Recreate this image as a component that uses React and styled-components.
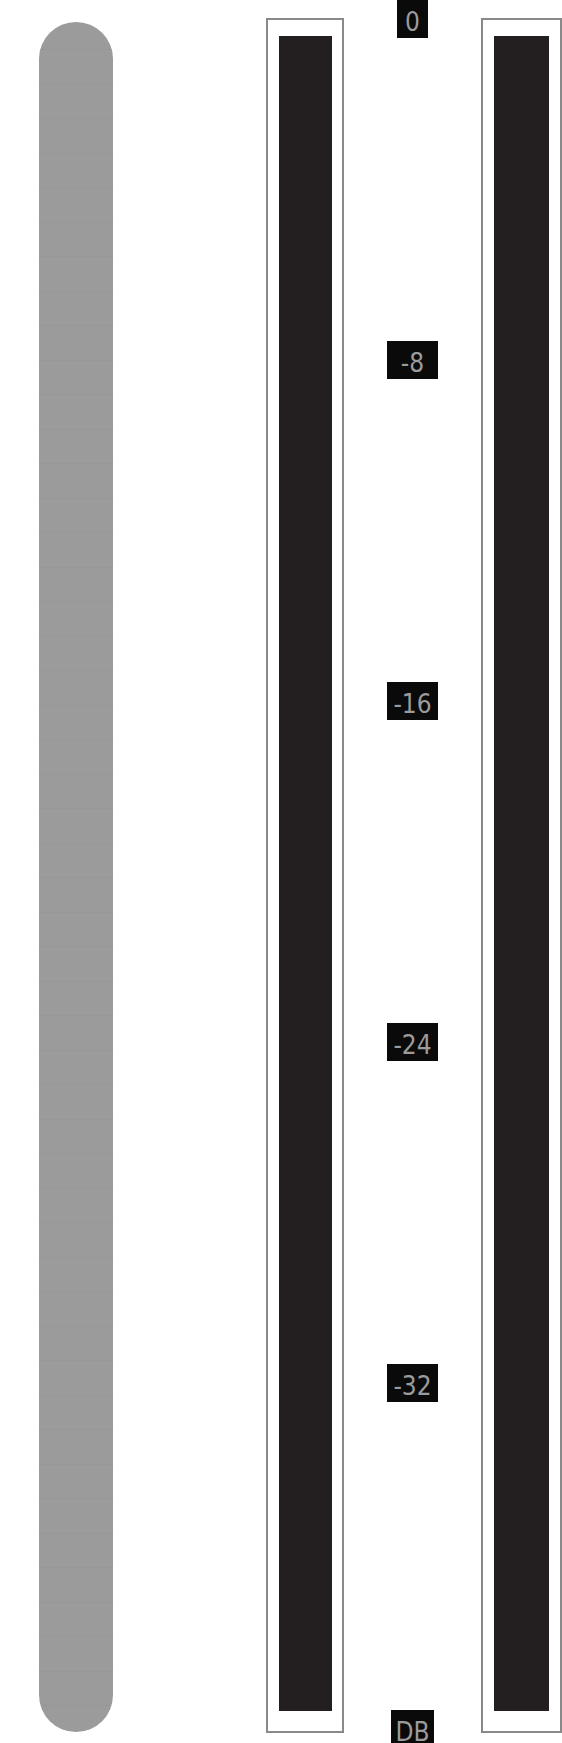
import React from 'react';
import styled, { createGlobalStyle } from 'styled-components';

const Global = createGlobalStyle`
  html, body { margin: 0; padding: 0; background: #ffffff; }
  body { width: 562px; height: 1743px; overflow: hidden; }
`;

const Stage = styled.div`
  display: flex;
  align-items: flex-start;
  width: 562px;
  height: 1743px;
  padding-left: 39px;
  box-sizing: border-box;
`;

const Fader = styled.div`
  flex: none;
  width: 74px;
  height: 1710px;
  margin-top: 22px;
  margin-right: 153px;
  border-radius: 37px;
  background: #9a9b9a;
  overflow: hidden;
  display: flex;
  flex-direction: column;
  padding-top: 27px;
  box-sizing: border-box;
`;

const FaderSegment = styled.div`
  flex: none;
  height: 34.5px;
  border-top: 1px solid #969796;
  box-sizing: border-box;
`;

const Meter = styled.div`
  flex: none;
  width: ${(p) => p.$w}px;
  height: 1715px;
  margin-top: 18px;
  border: 2px solid #898989;
  box-sizing: border-box;
  padding: 16px ${(p) => p.$pr}px 20px 11px;
`;

const MeterWell = styled.div`
  height: 100%;
  background: #231f20;
`;

const Scale = styled.div`
  flex: none;
  width: 137px;
  display: flex;
  flex-direction: column;
  align-items: center;
  gap: 303px;
`;

const Tick = styled.div`
  box-sizing: border-box;
  height: 38px;
  overflow: hidden;
  min-width: ${(p) => (p.$wide ? 51 : 31)}px;
  padding: 0 4px;
  margin-top: ${(p) => p.$mt || 0}px;
  background: #0a0a0a;
  color: #9b9b9b;
  font-family: 'Liberation Sans Narrow', 'DejaVu Sans Condensed', sans-serif;
  font-size: 26px;
  line-height: 44px;
  text-align: center;
`;

const ticks = [
  { t: '0' },
  { t: '-8', wide: true },
  { t: '-16', wide: true },
  { t: '-24', wide: true },
  { t: '-32', wide: true },
  { t: 'DB', mt: 5 },
];

export default function App() {
  const segs = Array.from({ length: 49 });
  return (
    <>
      <Global />
      <Stage>
        <Fader>
          {segs.map((_, i) => (
            <FaderSegment key={i} />
          ))}
        </Fader>
        <Meter $w={78} $pr={10}>
          <MeterWell />
        </Meter>
        <Scale>
          {ticks.map((k) => (
            <Tick key={k.t} $wide={k.wide} $mt={k.mt}>
              {k.t}
            </Tick>
          ))}
        </Scale>
        <Meter $w={81} $pr={11}>
          <MeterWell />
        </Meter>
      </Stage>
    </>
  );
}
